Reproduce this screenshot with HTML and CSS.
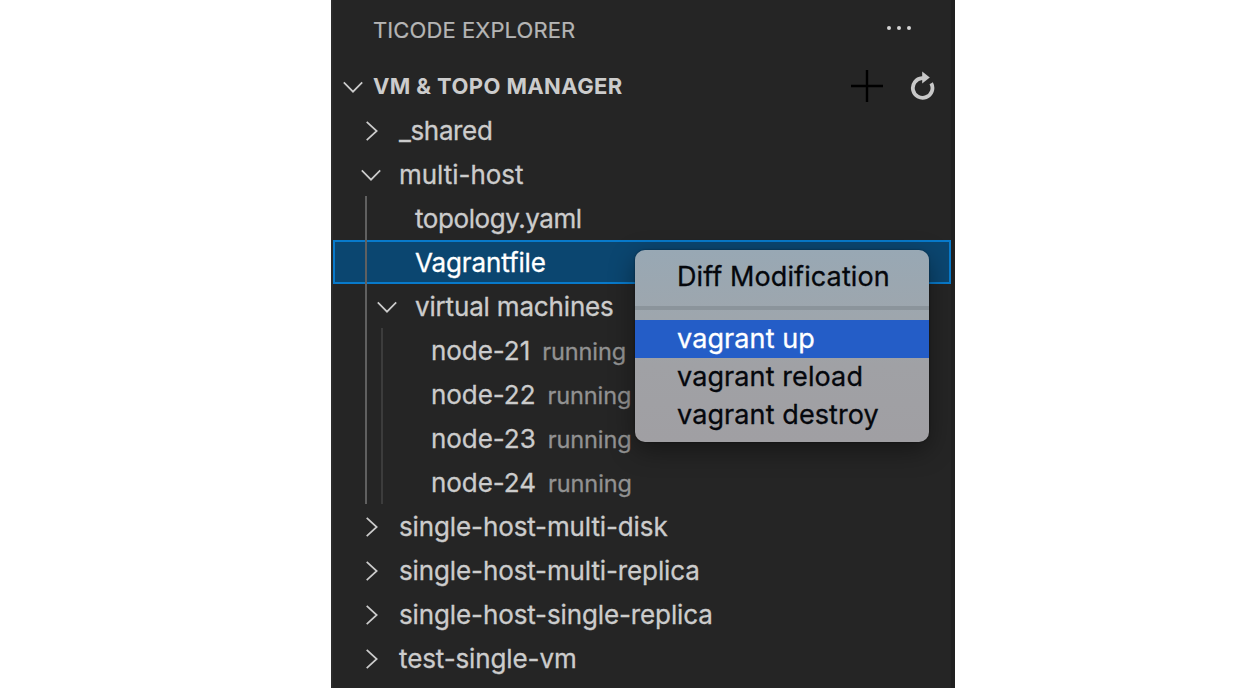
FILE: index.html
```html
<!DOCTYPE html>
<html lang="en">
<head>
<meta charset="utf-8">
<title>TiCode Explorer</title>
<link rel="stylesheet" href="styles.css">
</head>
<body>
<svg width="0" height="0" class="defs">
  <symbol id="down" viewBox="0 0 20 20"><path d="M.8 5.3 10 14.7 19.2 5.3"/></symbol>
  <symbol id="right" viewBox="0 0 20 20"><path d="M5.7.8 15.7 10 5.7 19.2"/></symbol>
</svg>
<main class="panel">
  <header class="title">
    <h1><span>TICODE EXPLORER</span></h1>
    <svg class="more" width="26" height="6" viewBox="0 0 26 6"><circle cx="3" cy="3" r="2"/><circle cx="13" cy="3" r="2"/><circle cx="23" cy="3" r="2"/></svg>
  </header>
  <section class="section">
    <svg class="chevron"><use href="#down"/></svg>
    <h2><span>VM &amp; TOPO MANAGER</span></h2>
    <svg class="add" width="32" height="32" viewBox="0 0 32 32"><path d="M16 0V32M0 16H32"/></svg>
    <svg class="refresh" width="26" height="30" viewBox="0 0 26 30"><path class="ring" d="M15 7.2H13A9.8 9.8 0 1 0 22.2 12.2"/><path class="tip" d="M13.2 .6 20.8 6.6 13.2 12.4Z"/></svg>
  </section>
  <div class="tree">
    <div class="row"><svg class="chevron"><use href="#right"/></svg><span class="t1">_shared</span></div>
    <div class="row"><svg class="chevron"><use href="#down"/></svg><span class="t2">multi-host</span></div>
    <div class="group">
      <div class="row leaf"><span class="t3">topology.yaml</span></div>
      <div class="row leaf selected"><span class="t4">Vagrantfile</span></div>
      <div class="row nested"><svg class="chevron"><use href="#down"/></svg><span class="t5">virtual machines</span></div>
      <div class="nodes">
        <div class="row node"><span>node-21</span><small>running</small></div>
        <div class="row node"><span>node-22</span><small>running</small></div>
        <div class="row node"><span>node-23</span><small>running</small></div>
        <div class="row node"><span>node-24</span><small>running</small></div>
      </div>
    </div>
    <div class="row"><svg class="chevron"><use href="#right"/></svg><span>single-host-multi-disk</span></div>
    <div class="row"><svg class="chevron"><use href="#right"/></svg><span>single-host-multi-replica</span></div>
    <div class="row"><svg class="chevron"><use href="#right"/></svg><span>single-host-single-replica</span></div>
    <div class="row"><svg class="chevron"><use href="#right"/></svg><span>test-single-vm</span></div>
  </div>
  <nav class="menu">
    <div class="item first"><span>Diff Modification</span></div>
    <hr>
    <div class="item active"><span>vagrant up</span></div>
    <div class="item"><span>vagrant reload</span></div>
    <div class="item"><span>vagrant destroy</span></div>
  </nav>
</main>
</body>
</html>
```
FILE: styles.css
```css
* { box-sizing: border-box; }
body { margin: 0; background: #fff; font-family: Inter, "Liberation Sans", sans-serif; }
.defs { position: absolute; }
.panel { position: relative; width: 624px; height: 688px; margin-left: 331px; overflow: hidden; background: #252525; border-left: 2px solid #2b2b2b; border-right: 4px solid #202020; color: #ccc; }
.title { display: flex; align-items: center; height: 64px; padding: 0 39px 4px 40px; }
h1, h2 { flex: 1; margin: 0; font-size: 22px; line-height: 44px; }
h1 { font-weight: 400; color: #b5b5b5; letter-spacing: .1px; -webkit-text-stroke: .2px; }
h2 { font-weight: 700; letter-spacing: .39px; }
.more { fill: #d4d4d4; margin-bottom: 5px; }
.section { display: flex; align-items: center; height: 44px; padding: 0 16px 0 10px; }
.chevron { width: 20px; height: 20px; flex: none; fill: none; stroke: #ccc; stroke-width: 1.7; }
.section .chevron { margin-top: 2px; }
.section h2 { margin-left: 10px; }
.add { stroke: #000; stroke-width: 2.4; }
.refresh { margin-left: 26px; }
.ring { fill: none; stroke: #c8c8c8; stroke-width: 3.8; }
.tip { fill: #c8c8c8; }
.row { display: flex; align-items: center; height: 44px; padding: 2px 0 0 28px; font-size: 26px; line-height: 42px; letter-spacing: -.12px; white-space: nowrap; -webkit-text-stroke: .3px; }
.row .chevron { margin-right: 18px; }
.t1 { letter-spacing: -.36px; }
.t2 { letter-spacing: -.03px; }
.t3 { letter-spacing: -.43px; }
.t5 { letter-spacing: -.17px; }
.group, .nodes { position: relative; }
.group::after, .nodes::after { content: ""; position: absolute; top: 0; bottom: 0; left: 32px; width: 2px; background: #606060; }
.nodes::after { left: 48px; background: #3c3c3c; }
.leaf { padding-left: 82px; }
.selected { width: 618px; padding-left: 80px; background: #0b4670; border: 2px solid #087acb; color: #fff; }
.nested { padding-left: 44px; }
.node { padding-left: 98px; letter-spacing: -.05px; }
small { margin-left: 12px; font-size: 23.5px; color: #929292; padding-top: 2px; letter-spacing: -.1px; }
.menu { position: absolute; left: 302px; top: 250px; width: 294px; height: 192px; overflow: hidden; border-radius: 10px; background: linear-gradient(#98a8b4, #9ea6ad 35%, #a0a1a5 60%, #a09fa3); box-shadow: 0 8px 26px rgba(0,0,0,.4), 0 0 2px rgba(0,0,0,.5); color: #05070c; }
.item { height: 38px; padding-left: 42px; font-size: 27px; line-height: 38px; letter-spacing: .1px; white-space: nowrap; -webkit-text-stroke: .3px; }
.first { margin-top: 8px; }
.menu hr { height: 4px; margin: 10px 0; border: 0; background: #8b949b; }
.active { background: #245dc7; color: #fff; }
```
